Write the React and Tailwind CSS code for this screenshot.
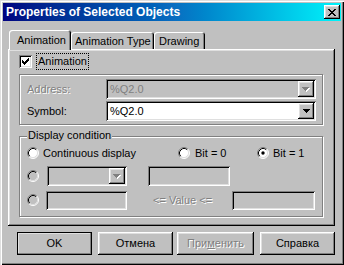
import React from 'react';

// classic win9x bevels
const raised = 'shadow-[inset_-1px_-1px_#000,inset_1px_1px_#fff,inset_-2px_-2px_#808080,inset_2px_2px_#dfdfdf]';
const sunken = 'shadow-[inset_1px_1px_#808080,inset_-1px_-1px_#fff,inset_2px_2px_#000,inset_-2px_-2px_#dfdfdf]';
const etched = 'border border-[#808080] shadow-[inset_1px_1px_#fff,1px_1px_#fff]';
const dim = 'text-[#808080] [text-shadow:1px_1px_#fff]';

function Pixels({ rows, color, w, h }) {
  // tiny bitmap glyph helper (checkmarks, arrows, close X)
  const rects = [];
  rows.forEach((row, y) =>
    row.split('').forEach((c, x) => {
      if (c === 'X') rects.push(<rect key={`${x}-${y}`} x={x} y={y} width="1" height="1" fill={color} />);
    })
  );
  return (
    <svg width={w} height={h} viewBox={`0 0 ${w} ${h}`} shapeRendering="crispEdges">
      {rects}
    </svg>
  );
}

const arrowRows = ['XXXXXXX', '.XXXXX.', '..XXX..', '...X...'];

function Arrow({ disabled }) {
  if (!disabled) return <Pixels rows={arrowRows} color="#000" w={7} h={4} />;
  return (
    <div className="relative w-[8px] h-[5px]">
      <div className="absolute left-[1px] top-[1px]">
        <Pixels rows={arrowRows} color="#fff" w={7} h={4} />
      </div>
      <div className="absolute left-0 top-0">
        <Pixels rows={arrowRows} color="#808080" w={7} h={4} />
      </div>
    </div>
  );
}

function Radio({ checked, disabled }) {
  return (
    <svg width="12" height="12" viewBox="0 0 12 12" className="shrink-0">
      <circle cx="6" cy="6" r="5" fill={disabled ? '#c0c0c0' : '#fff'} />
      <path d="M2.11 9.89 A5.5 5.5 0 0 1 9.89 2.11" fill="none" stroke="#808080" />
      <path d="M9.89 2.11 A5.5 5.5 0 0 1 2.11 9.89" fill="none" stroke="#fff" />
      <path d="M2.82 9.18 A4.5 4.5 0 0 1 9.18 2.82" fill="none" stroke="#000" />
      <path d="M9.18 2.82 A4.5 4.5 0 0 1 2.82 9.18" fill="none" stroke="#dfdfdf" />
      {checked && <circle cx="6" cy="6" r="1.7" fill="#000" />}
    </svg>
  );
}

function Combo({ value, disabled, className }) {
  return (
    <div className={`flex items-stretch p-[2px] ${sunken} ${disabled ? 'bg-[#c0c0c0]' : 'bg-white'} ${className}`}>
      <div className={`flex-1 flex items-center pl-[2px] ${disabled ? 'text-[#808080]' : 'text-black'}`}>{value}</div>
      <div className={`w-[16px] flex items-center justify-center bg-[#c0c0c0] ${raised}`}>
        <Arrow disabled={disabled} />
      </div>
    </div>
  );
}

function Field({ className }) {
  return <div className={`bg-[#c0c0c0] ${sunken} ${className}`} />;
}

function Button({ children, isDefault, className }) {
  return (
    <div
      className={`h-[23px] flex items-center justify-center bg-[#c0c0c0] ${raised} ${
        isDefault ? 'outline outline-1 outline-black -outline-offset-1' : ''
      } ${className}`}
    >
      {children}
    </div>
  );
}

export default function App() {
  return (
    <div
      className={`w-[344px] h-[265px] bg-[#c0c0c0] p-[3px] flex flex-col text-[11px] leading-none text-black shadow-[inset_1px_1px_#dfdfdf,inset_2px_2px_#fff,inset_-1px_-1px_#000,inset_-2px_-2px_#808080] font-['Liberation_Sans',Arial,sans-serif]`}
    >
      {/* title bar */}
      <div className="h-[18px] flex items-center justify-between pl-[3px] pr-[1px] bg-gradient-to-r from-[#000080] via-[#0a6cc0] to-[#00f4fa]">
        <span className="text-white font-bold text-[12px]">Properties of Selected Objects</span>
        <div className={`w-[16px] h-[14px] flex items-center justify-center bg-[#c0c0c0] ${raised}`}>
          <Pixels
            rows={['XX....XX', '.XX..XX.', '..XXXX..', '...XX...', '..XXXX..', '.XX..XX.', 'XX....XX']}
            color="#000"
            w={8}
            h={7}
          />
        </div>
      </div>

      {/* tabs */}
      <div className="mt-[9px] ml-[6px] h-[19px] flex items-end">
        <div className="relative z-10 -mb-[1px] w-[62px] h-[20px] bg-[#c0c0c0] rounded-t-[3px] pl-[8px] pt-[5px] shadow-[inset_1px_1px_#fff,inset_-1px_0_#000,inset_-2px_0_#808080]">
          Animation
        </div>
        <div className="w-[83px] h-[17px] rounded-t-[3px] pl-[4px] pt-[4px] whitespace-nowrap shadow-[inset_1px_1px_#fff,inset_-1px_0_#000,inset_-2px_0_#808080]">
          Animation Type
        </div>
        <div className="w-[51px] h-[17px] rounded-t-[3px] pl-[5px] pt-[4px] shadow-[inset_1px_1px_#fff,inset_-1px_0_#000,inset_-2px_0_#808080]">
          Drawing
        </div>
      </div>

      {/* tab page */}
      <div className={`ml-[5px] w-[327px] h-[177px] pl-[11px] pt-[4px] flex flex-col ${raised}`}>
        <div className="h-[17px] flex items-center">
          <div className={`w-[13px] h-[13px] bg-white flex items-center justify-center ${sunken}`}>
            <Pixels
              rows={['......X', '.....XX', 'X...XXX', 'XX.XXX.', 'XXXXX..', '.XXX...', '..X....']}
              color="#000"
              w={7}
              h={7}
            />
          </div>
          <div className="ml-[4px] h-[17px] border border-dotted border-black whitespace-nowrap flex items-center px-px">
            Animation
          </div>
        </div>

        <div className={`mt-[4px] w-[304px] h-[51px] pl-[7px] pt-[4px] flex flex-col gap-[2px] ${etched}`}>
          <div className="flex items-center">
            <span className={`w-[79px] ${dim}`}>Address:</span>
            <Combo value="%Q2.0" disabled className="w-[210px] h-[20px]" />
          </div>
          <div className="flex items-center">
            <span className="w-[79px]">Symbol:</span>
            <Combo value="%Q2.0" className="w-[210px] h-[20px]" />
          </div>
        </div>

        <div className={`relative mt-[11px] w-[304px] h-[81px] pl-[7px] pt-[9px] flex flex-col ${etched}`}>
          <span className="absolute -top-[7px] left-[7px] px-px bg-[#c0c0c0]">Display condition</span>
          <div className="h-[14px] flex items-center">
            <div className="w-[151px] flex items-center gap-[4px]">
              <Radio />
              <span>Continuous display</span>
            </div>
            <div className="w-[79px] flex items-center gap-[5px]">
              <Radio />
              <span>Bit = 0</span>
            </div>
            <div className="flex items-center gap-[4px]">
              <Radio checked />
              <span>Bit = 1</span>
            </div>
          </div>
          <div className="mt-[6px] h-[20px] flex items-center">
            <Radio disabled />
            <Combo disabled className="ml-[8px] w-[80px] h-[20px]" />
            <Field className="ml-[21px] w-[82px] h-[20px]" />
          </div>
          <div className="mt-[4px] h-[20px] flex items-center">
            <Radio disabled />
            <Field className="ml-[7px] w-[81px] h-[19px]" />
            <span className={`ml-[26px] w-[79px] ${dim}`}>&lt;= Value &lt;=</span>
            <Field className="w-[83px] h-[19px]" />
          </div>
        </div>
      </div>

      {/* buttons */}
      <div className="mt-[6px] ml-[14px] flex">
        <Button isDefault className="w-[75px]">OK</Button>
        <Button className="ml-[6px] w-[75px]">Отмена</Button>
        <Button className={`ml-[4px] w-[77px] ${dim}`}>
          <span>
            При<span className="underline">м</span>енить
          </span>
        </Button>
        <Button className="ml-[6px] w-[75px]">Справка</Button>
      </div>
    </div>
  );
}
